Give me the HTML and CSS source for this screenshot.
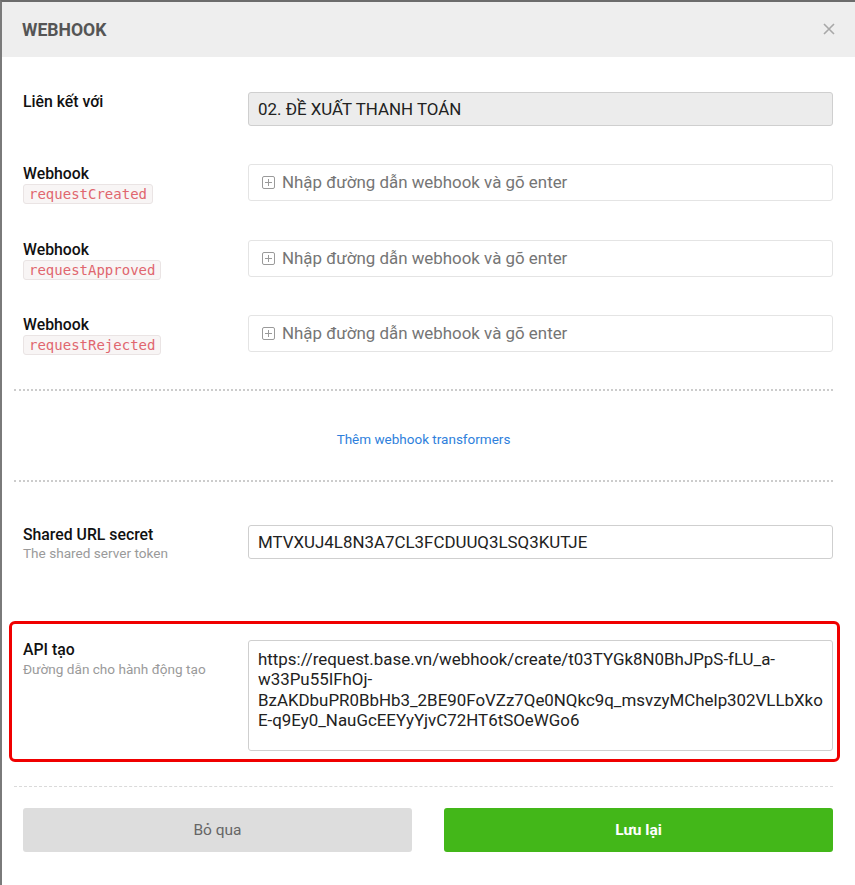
FILE: index.html
```html
<!DOCTYPE html>
<html lang="vi">
<head>
<meta charset="utf-8">
<title>Webhook</title>
<link rel="stylesheet" href="styles.css">
</head>
<body>
<div class="modal">
  <div class="modal-header">
    <div class="modal-title">WEBHOOK</div>
    <button class="close" aria-label="Đóng">
      <svg width="12" height="12" viewBox="0 0 12 12"><path d="M1 1L11 11M11 1L1 11" stroke="#a8a8a8" stroke-width="1.6" fill="none"/></svg>
    </button>
  </div>
  <div class="modal-body">
    <div class="row row-first">
      <div class="label"><div class="label-title">Liên kết với</div></div>
      <div class="field"><div class="input input-disabled">02. ĐỀ XUẤT THANH TOÁN</div></div>
    </div>

    <div class="row row-wide">
      <div class="label"><div class="label-title">Webhook</div><code class="badge">requestCreated</code></div>
      <div class="field"><div class="input input-tags"><span class="plus"></span><span class="placeholder">Nhập đường dẫn webhook và gõ enter</span></div></div>
    </div>

    <div class="row">
      <div class="label"><div class="label-title">Webhook</div><code class="badge">requestApproved</code></div>
      <div class="field"><div class="input input-tags"><span class="plus"></span><span class="placeholder">Nhập đường dẫn webhook và gõ enter</span></div></div>
    </div>

    <div class="row row-last">
      <div class="label"><div class="label-title">Webhook</div><code class="badge">requestRejected</code></div>
      <div class="field"><div class="input input-tags"><span class="plus"></span><span class="placeholder">Nhập đường dẫn webhook và gõ enter</span></div></div>
    </div>

    <div class="sep"></div>
    <div class="link-wrap"><a class="link" href="#">Thêm webhook transformers</a></div>
    <div class="sep"></div>

    <div class="row row-secret">
      <div class="label"><div class="label-title">Shared URL secret</div><div class="label-sub">The shared server token</div></div>
      <div class="field"><div class="input">MTVXUJ4L8N3A7CL3FCDUUQ3LSQ3KUTJE</div></div>
    </div>

    <div class="highlight">
      <div class="row row-api">
        <div class="label"><div class="label-title">API tạo</div><div class="label-sub">Đường dẫn cho hành động tạo</div></div>
        <div class="field"><div class="textarea">https://request.base.vn/webhook/create/t03TYGk8N0BhJPpS-fLU_a-<br>w33Pu55IFhOj-<br>BzAKDbuPR0BbHb3_2BE90FoVZz7Qe0NQkc9q_msvzyMChelp302VLLbXko<br>E-q9Ey0_NauGcEEYyYjvC72HT6tSOeWGo6</div></div>
      </div>
    </div>

    <div class="sep sep-light"></div>

    <div class="actions">
      <button class="btn btn-cancel">Bỏ qua</button>
      <button class="btn btn-save">Lưu lại</button>
    </div>
  </div>
</div>
</body>
</html>
```
FILE: styles.css
```css
* { box-sizing: border-box; }
html, body { margin: 0; padding: 0; }
body {
  width: 855px;
  height: 885px;
  background: #fff;
  border-top: 2px solid #6c6c6c;
  border-left: 2px solid #7a7a7a;
  font-family: Roboto, "Liberation Sans", sans-serif;
  color: #111;
  overflow: hidden;
}
.modal { background: #fff; }
.modal-header {
  height: 55px;
  background: #eeeeee;
  display: flex;
  align-items: center;
  justify-content: space-between;
  padding: 0 20px 0 20px;
}
.modal-title {
  font-size: 17.6px;
  font-weight: 700;
  color: #555;
}
.close {
  border: 0;
  background: transparent;
  padding: 0;
  width: 12px;
  height: 12px;
  display: flex;
  margin-top: -2px;
}
.modal-body {
  padding: 35px 22px 0 21px;
}
.row {
  display: grid;
  grid-template-columns: 225px 1fr;
  margin-bottom: 35px;
}
.row-first { margin-bottom: 38px; }
.row-wide { margin-bottom: 36px; }
.row-last { margin-bottom: 34px; }
.label-title {
  font-size: 15.8px;
  font-weight: 500;
  line-height: 18px;
  color: #111;
  padding-top: 1px;
}
.label-sub {
  font-size: 13.6px;
  line-height: 16px;
  color: #9a9a9a;
  margin-top: 1px;
}
.badge {
  display: inline-block;
  margin-top: 1px;
  height: 20px;
  line-height: 18px;
  padding: 0 5px;
  font-family: "DejaVu Sans Mono", "Liberation Mono", monospace;
  font-size: 14px;
  color: #e0666e;
  background: #f8f5f5;
  border: 1px solid #eae4e4;
  border-radius: 3px;
}
.input {
  height: 34px;
  border: 1px solid #cfcfcf;
  border-radius: 3px;
  padding: 0 9px;
  font-size: 16.9px;
  line-height: 32px;
  color: #222;
  background: #fff;
}
.input-disabled { background: #ececec; }
.input-tags {
  height: 37px;
  line-height: 35px;
  border-color: #e4e4e4;
  display: flex;
  align-items: center;
  padding-left: 13px;
}
.plus {
  width: 13px;
  height: 13px;
  border: 1px solid #9a9a9a;
  border-radius: 2px;
  position: relative;
  margin-right: 7px;
  flex: none;
}
.plus::before, .plus::after {
  content: "";
  position: absolute;
  background: #9a9a9a;
}
.plus::before { left: 2px; right: 2px; top: 5px; height: 1px; }
.plus::after { top: 2px; bottom: 2px; left: 5px; width: 1px; }
.placeholder { color: #757575; }
.sep {
  margin-left: -9px;
  height: 0;
  border-top: 2px dotted #cccccc;
}
.sep-light {
  border-top: 1px dashed #dadada;
  margin-top: 24px;
}
.link-wrap {
  text-align: center;
  padding: 40px 0 33px;
  line-height: 16px;
  margin-left: -9px;
}
.link {
  font-size: 13.5px;
  color: #2f7fdc;
  text-decoration: none;
}
.row-secret { margin-top: 43px; margin-bottom: 60px; }
.highlight {
  margin: 0 -7px 0 -14px;
  border: 3px solid #f00000;
  border-radius: 6px;
  padding: 16px 4px 8px 11px;
}
.row-api { margin-bottom: 0; }
.row-api .label-sub { margin-top: 2px; }
.textarea {
  height: 111px;
  border: 1px solid #cfcfcf;
  border-radius: 3px;
  padding: 8px 9px;
  font-size: 16.9px;
  line-height: 20.4px;
  color: #222;
  white-space: nowrap;
}
.actions {
  display: grid;
  grid-template-columns: 1fr 1fr;
  gap: 32px;
  margin-top: 21px;
}
.btn {
  height: 44px;
  border: 0;
  border-radius: 3px;
  font-family: Roboto, "Liberation Sans", sans-serif;
  font-size: 15.5px;
}
.btn-cancel { background: #dddddd; color: #666; }
.btn-save { background: #43b719; color: #fff; font-weight: 700; }
```
